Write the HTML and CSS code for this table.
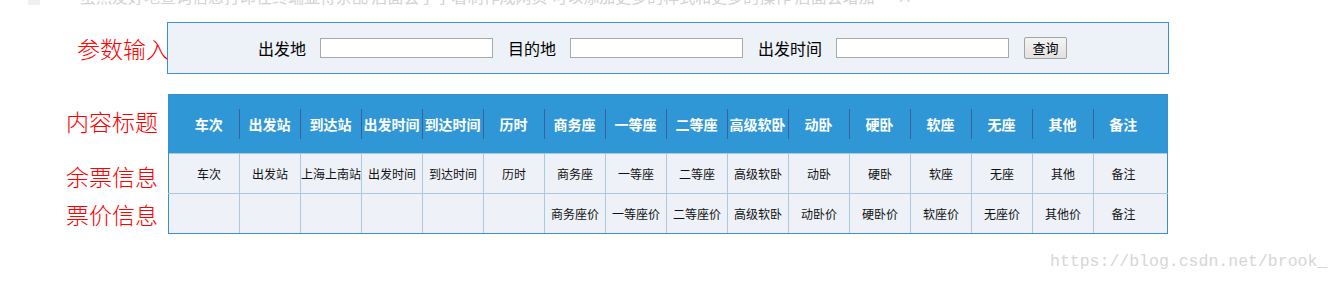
FILE: index.html
```html
<!DOCTYPE html>
<html lang="zh-CN">
<head>
<meta charset="utf-8">
<title>余票查询</title>
<link rel="stylesheet" href="styles.css">
</head>
<body>
<div class="top-fade">
  <span class="top-icon"></span>
  <span class="top-text">虽然友好地查询信息打印在终端显得杂乱 后面会了学着制作成网页 可以添加更多的样式和更多的操作 后面会增加</span>
  <span class="top-close">×</span>
</div>

<section class="params">
  <div class="side-label side-label--params">参数输入</div>
  <form class="param-box">
    <label class="field-label">出发地</label>
    <input class="field-input" type="text">
    <label class="field-label">目的地</label>
    <input class="field-input" type="text">
    <label class="field-label">出发时间</label>
    <input class="field-input" type="text">
    <button type="button" class="query-btn">查询</button>
  </form>
</section>

<section class="results">
  <div class="side-labels">
    <div class="side-label side-label--head">内容标题</div>
    <div class="side-label side-label--remain">余票信息</div>
    <div class="side-label side-label--price">票价信息</div>
  </div>
  <table class="ticket-table">
    <colgroup>
      <col class="col-first">
      <col class="col-mid"><col class="col-mid"><col class="col-mid"><col class="col-mid">
      <col class="col-mid"><col class="col-mid"><col class="col-mid"><col class="col-mid">
      <col class="col-mid"><col class="col-mid"><col class="col-mid"><col class="col-mid">
      <col class="col-mid"><col class="col-mid">
      <col class="col-last">
    </colgroup>
    <thead>
      <tr>
        <th><span>车次</span></th>
        <th><span>出发站</span></th>
        <th><span>到达站</span></th>
        <th><span>出发时间</span></th>
        <th><span>到达时间</span></th>
        <th><span>历时</span></th>
        <th><span>商务座</span></th>
        <th><span>一等座</span></th>
        <th><span>二等座</span></th>
        <th><span>高级软卧</span></th>
        <th><span>动卧</span></th>
        <th><span>硬卧</span></th>
        <th><span>软座</span></th>
        <th><span>无座</span></th>
        <th><span>其他</span></th>
        <th><span class="no-sep">备注</span></th>
      </tr>
    </thead>
    <tbody>
      <tr>
        <td>车次</td>
        <td>出发站</td>
        <td>上海上南站</td>
        <td>出发时间</td>
        <td>到达时间</td>
        <td>历时</td>
        <td>商务座</td>
        <td>一等座</td>
        <td>二等座</td>
        <td>高级软卧</td>
        <td>动卧</td>
        <td>硬卧</td>
        <td>软座</td>
        <td>无座</td>
        <td>其他</td>
        <td>备注</td>
      </tr>
      <tr>
        <td></td>
        <td></td>
        <td></td>
        <td></td>
        <td></td>
        <td></td>
        <td>商务座价</td>
        <td>一等座价</td>
        <td>二等座价</td>
        <td>高级软卧</td>
        <td>动卧价</td>
        <td>硬卧价</td>
        <td>软座价</td>
        <td>无座价</td>
        <td>其他价</td>
        <td>备注</td>
      </tr>
    </tbody>
  </table>
</section>

<div class="watermark">https://blog.csdn.net/brook_</div>
</body>
</html>
```

FILE: styles.css
```css
* { box-sizing: border-box; }

html, body {
  margin: 0;
  padding: 0;
  background: #ffffff;
}

body {
  position: relative;
  width: 1341px;
  height: 282px;
  overflow: hidden;
  font-family: "Noto Sans CJK SC", "Microsoft YaHei", sans-serif;
  color: #000;
}

/* faded, cut-off line at the very top */
.top-fade {
  display: flex;
  align-items: flex-start;
  height: 8px;
  overflow: hidden;
  padding-left: 28px;
}

.top-icon {
  flex: none;
  width: 12px;
  height: 5px;
  background: #f0f0f0;
}

.top-text {
  margin-left: 40px;
  margin-top: -12px;
  font-size: 16px;
  line-height: 16px;
  color: #d2d2d2;
  white-space: nowrap;
}

.top-close {
  margin-left: 22px;
  margin-top: -12px;
  font-size: 16px;
  line-height: 16px;
  color: #d2d2d2;
}

/* parameters row */
.params {
  display: flex;
  align-items: center;
  margin-top: 14px;
  padding-left: 77px;
}

.side-label {
  color: #ff0000;
  font-size: 23px;
  font-weight: 300;
  white-space: nowrap;
}

.side-label--params {
  position: relative;
  z-index: 1;
  width: 90px;
  line-height: 30px;
}

.param-box {
  display: flex;
  align-items: center;
  width: 1002px;
  height: 52px;
  margin: 0;
  padding-left: 90px;
  border: 1px solid #3b8fd5;
  background: #edf1f8;
}

.field-label {
  margin-right: 14px;
  font-size: 16px;
  line-height: 20px;
}

.field-input {
  width: 173px;
  height: 20px;
  margin: 0 15px 0 0;
  padding: 0;
  border: 1px solid #a9a9a9;
  background: #fff;
  font: inherit;
}

.query-btn {
  width: 43px;
  height: 22px;
  padding: 0;
  border: 1px solid #a3a3a3;
  border-radius: 2px;
  background: linear-gradient(#f4f4f4, #e1e1e1);
  font-family: "Noto Sans CJK SC", sans-serif;
  font-size: 13px;
  line-height: 20px;
  color: #000;
}

/* result table with side labels */
.results {
  display: flex;
  align-items: flex-start;
  margin-top: 20px;
}

.side-labels {
  flex: none;
  width: 168px;
  padding-left: 66px;
}

.side-label--head { height: 55px; line-height: 55px; }
.side-label--remain { height: 54px; line-height: 54px; }
.side-label--price { height: 22px; line-height: 22px; }

.ticket-table {
  width: 1000px;
  table-layout: fixed;
  border-collapse: collapse;
  border: 1px solid #3a8fd2;
}

.col-first { width: 71px; }
.col-mid { width: 61px; }
.col-last { width: 74px; }

.ticket-table th {
  padding: 14px 0;
  background: #3097d6;
  color: #fff;
  font-size: 14px;
  font-weight: bold;
  text-align: center;
  white-space: nowrap;
  overflow: hidden;
}

.ticket-table th span {
  display: block;
  line-height: 30px;
  border-right: 1px solid #3a5f9c;
}

.ticket-table th span.no-sep { border-right: none; }

.ticket-table td {
  height: 40px;
  padding: 0;
  border: 1px solid #abc9dd;
  background: #eef1f8;
  font-size: 12px;
  text-align: center;
  white-space: nowrap;
  overflow: hidden;
  color: #111;
}

.ticket-table tr > :first-child { padding-left: 10px; }
.ticket-table tr > :last-child { padding-right: 14px; }

.ticket-table tbody tr:last-child td { border-bottom-color: #3a8fd2; }
.ticket-table td:first-child { border-left-color: #3a8fd2; }
.ticket-table td:last-child { border-right-color: #3a8fd2; }

/* blog watermark overlay */
.watermark {
  position: absolute;
  left: 1050px;
  top: 252px;
  font-family: "Liberation Mono", monospace;
  font-size: 16.5px;
  line-height: 20px;
  color: #d6d6d6;
}
```
